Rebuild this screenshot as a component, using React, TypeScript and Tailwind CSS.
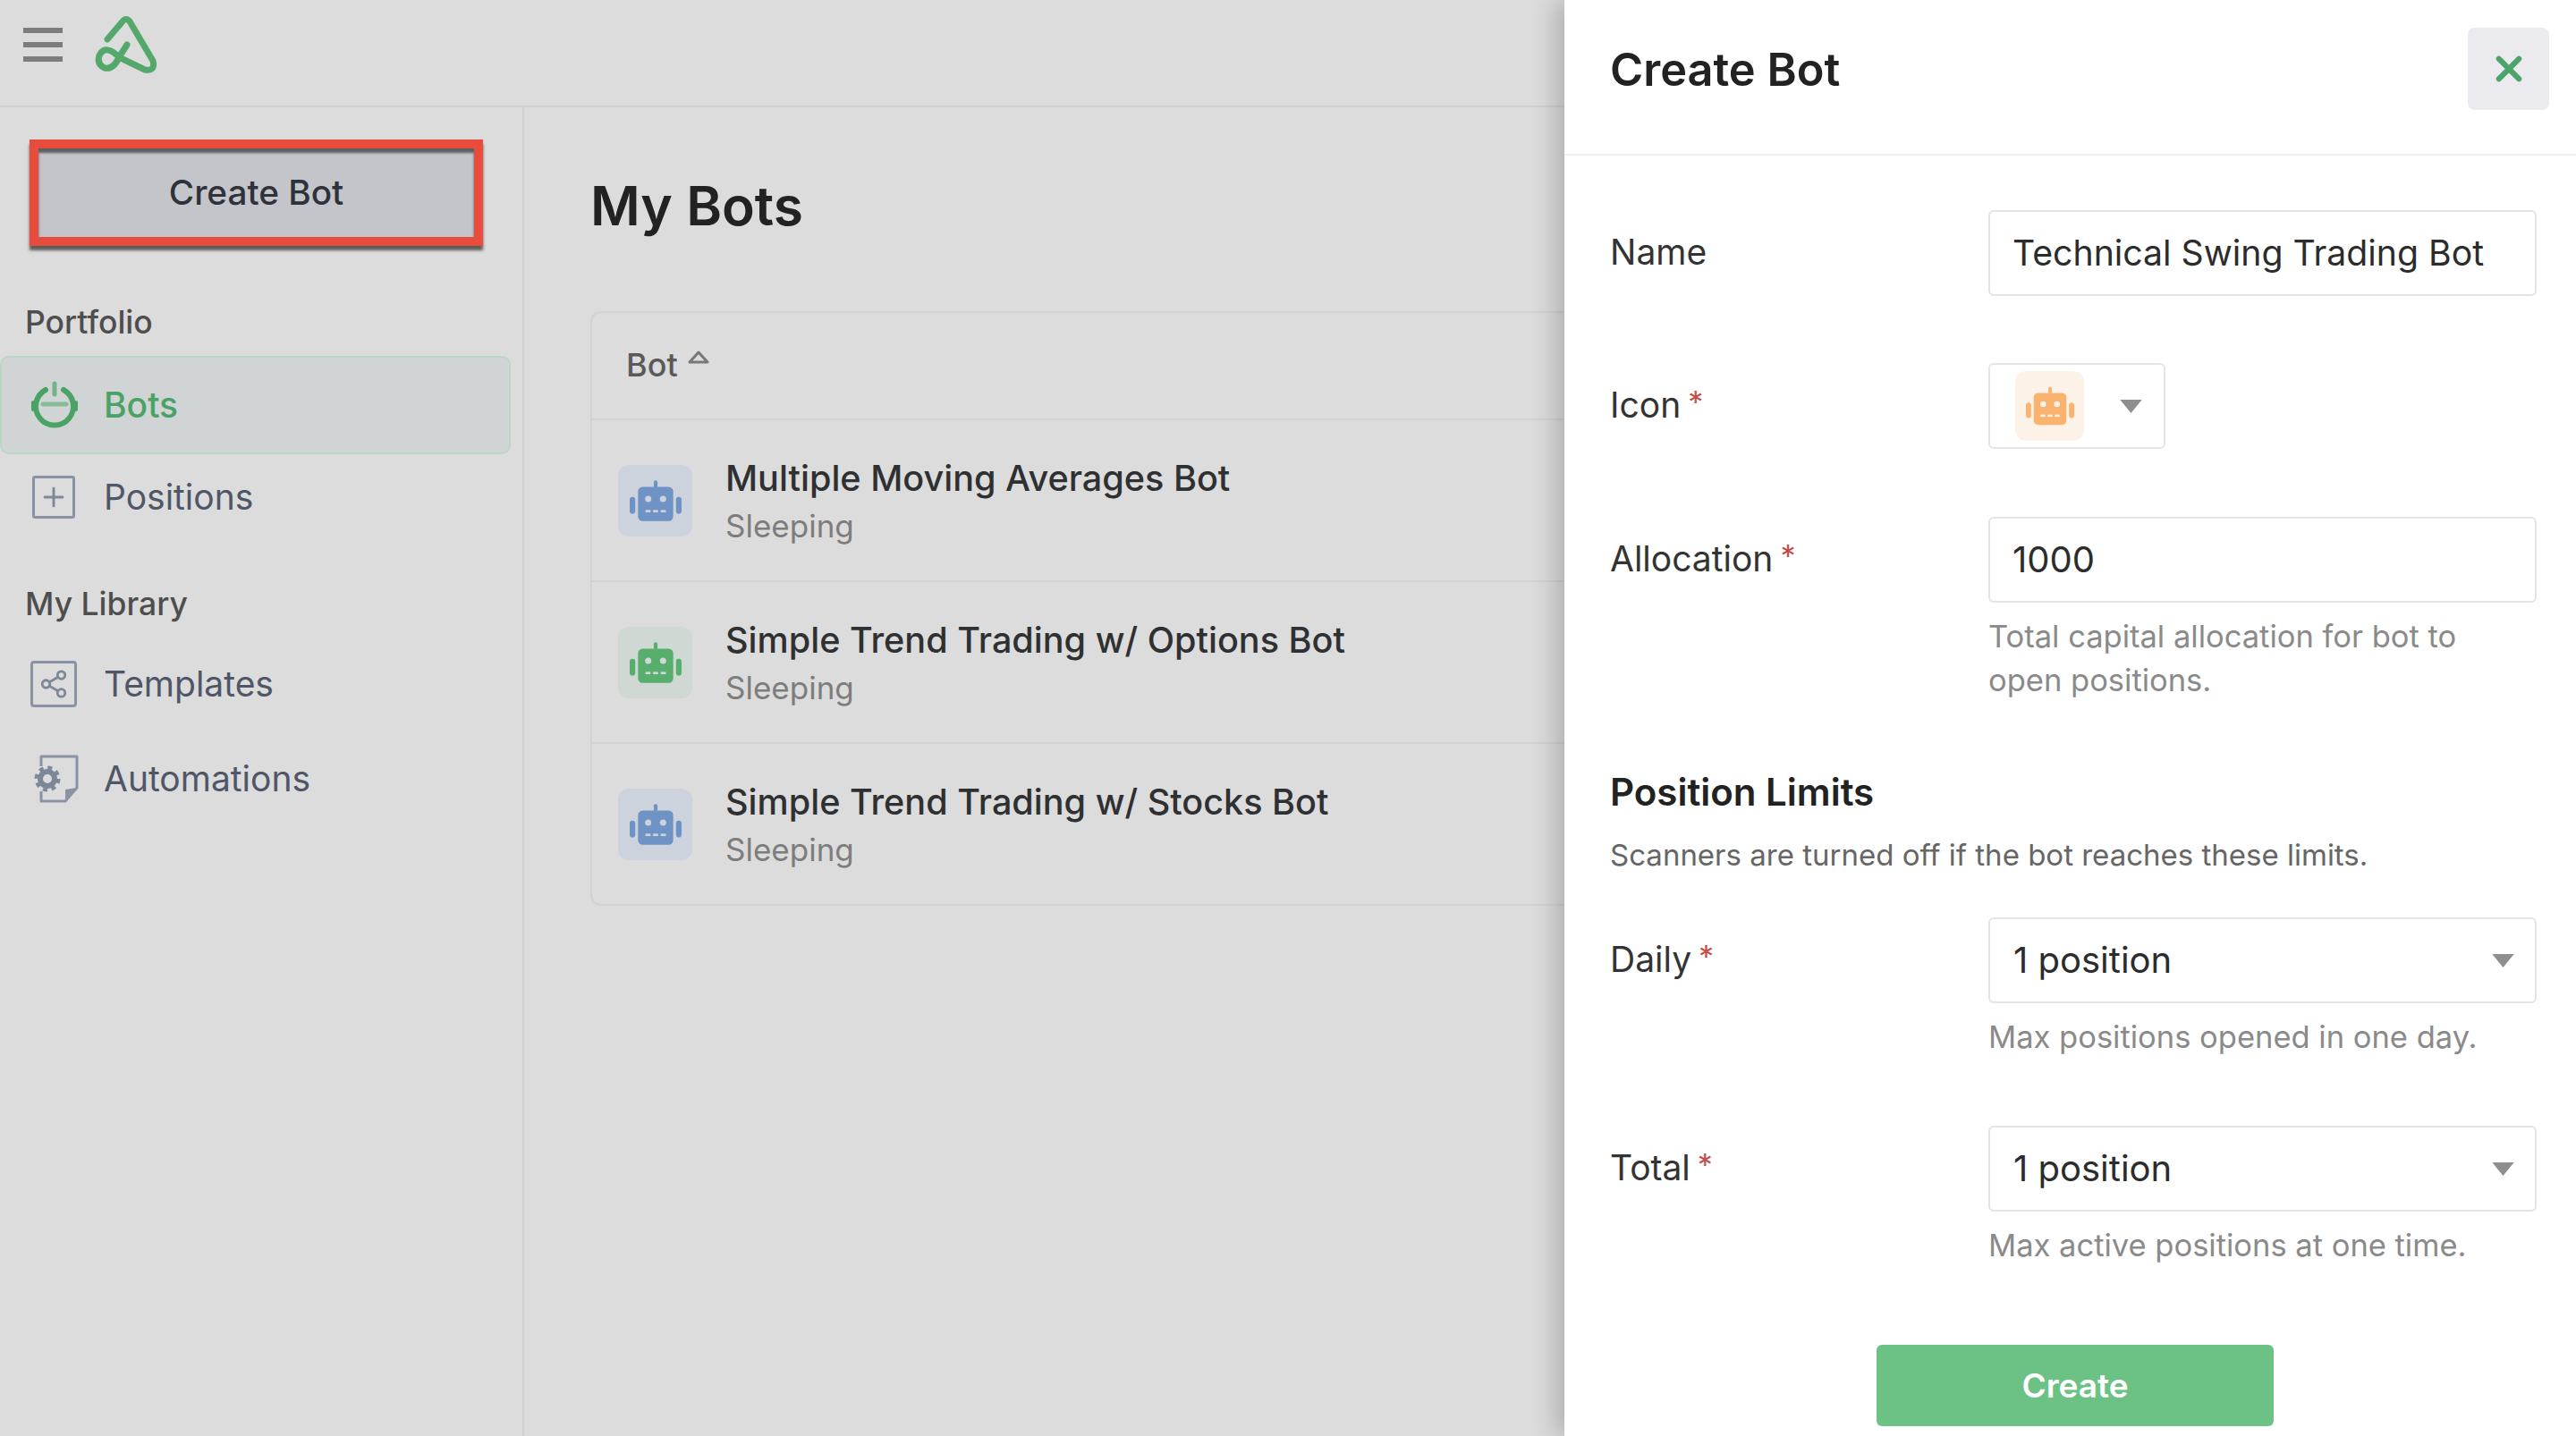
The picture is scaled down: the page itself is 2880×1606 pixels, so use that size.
import { Plus, Share2 } from 'lucide-react';

const font = { fontFamily: 'Inter, "Liberation Sans", sans-serif' };

function Robot({ color, eye, className }: { color: string; eye: string; className?: string }) {
  return (
    <svg viewBox="0 0 56 44" className={className ?? 'w-[58px] h-[46px]'}>
      <rect x="26" y="0" width="4" height="8" rx="2" fill={color} />
      <rect x="9" y="7" width="38" height="37" rx="5" fill={color} />
      <rect x="0" y="18" width="6" height="18" rx="3" fill={color} />
      <rect x="50" y="18" width="6" height="18" rx="3" fill={color} />
      <circle cx="20" cy="20" r="3.4" fill={eye} />
      <circle cx="36" cy="20" r="3.4" fill={eye} />
      <rect x="17" y="32" width="5.5" height="2.6" fill={eye} />
      <rect x="25.2" y="32" width="5.5" height="2.6" fill={eye} />
      <rect x="33.5" y="32" width="5.5" height="2.6" fill={eye} />
    </svg>
  );
}

function Logo() {
  return (
    <svg viewBox="0 0 70 66" className="w-[70px] h-[66px]" fill="none" stroke="#55a86c" strokeWidth="7" strokeLinecap="round" strokeLinejoin="round">
      <path d="M14 26 L31 6 Q35 1 39 6 L65 50 Q68 62 56 60 L29 47" />
      <path d="M36 32 L27 46 Q21 60 11 58 Q2 54 5 44 Q10 34 20 40 L29 47" />
    </svg>
  );
}

function BotsIcon() {
  return (
    <svg viewBox="0 0 54 54" className="w-[54px] h-[54px]" fill="none">
      <path d="M17 10 A21 21 0 1 0 37 10" stroke="#4ba265" strokeWidth="6" strokeLinecap="round" />
      <rect x="1" y="22" width="4" height="12" rx="2" fill="#4ba265" />
      <rect x="49" y="22" width="4" height="12" rx="2" fill="#4ba265" />
      <path d="M27 3 V15" stroke="#74b388" strokeWidth="5" strokeLinecap="round" />
      <path d="M14 26 H40" stroke="#86bb97" strokeWidth="5" strokeLinecap="round" />
    </svg>
  );
}

function AutomationIcon() {
  return (
    <svg viewBox="0 0 50 54" className="w-[50px] h-[54px] ml-[6px]" fill="none">
      <path d="M8 13 V2 H48 V37 L35 52 H8 V41" stroke="#8a93a3" strokeWidth="3" strokeLinejoin="round" />
      <path d="M48 37 L35 39 V52 Z" fill="#8a93a3" />
      <circle cx="15" cy="27" r="8" stroke="#7e8798" strokeWidth="6" />
      <circle cx="15" cy="27" r="12.5" stroke="#7e8798" strokeWidth="4" strokeDasharray="5 4.8" />
    </svg>
  );
}

function NavItem({ icon, label, className }: { icon: React.ReactNode; label: string; className?: string }) {
  return (
    <div className={`flex items-center ${className ?? 'h-[106px]'}`}>
      <div className="w-[116px] pl-[32px] shrink-0 flex items-center">{icon}</div>
      <span className="text-[39px] text-[#4f5668]">{label}</span>
    </div>
  );
}

function BotRow({ title, color, tint, eye }: { title: string; color: string; tint: string; eye: string }) {
  return (
    <div className="h-[181px] border-t-2 border-[#d2d2d2] flex items-center pl-[29px]">
      <div className={`w-[83px] h-[80px] rounded-[12px] flex items-center justify-center shrink-0 ${tint}`}>
        <Robot color={color} eye={eye} />
      </div>
      <div className="ml-[37px] pt-[3px]">
        <div className="text-[39.6px] leading-[54px] font-medium text-[#2f3032] whitespace-nowrap">{title}</div>
        <div className="text-[35px] leading-[52px] text-[#7d7d7d]">Sleeping</div>
      </div>
    </div>
  );
}

function Req({ label }: { label: string }) {
  return (
    <span className="text-[39px] text-[#333] flex items-start pb-[2px]">
      {label}
      <span className="ml-[8px] mt-[6px] text-[34px] leading-[40px] text-[#c0504d]">*</span>
    </span>
  );
}

function Caret({ className }: { className?: string }) {
  return (
    <svg viewBox="0 0 26 16" className={`w-[25px] h-[15px] ${className ?? ''}`}>
      <path d="M0 0 H26 L13 16 Z" fill="#8f8f8f" />
    </svg>
  );
}

function SelectBox({ value }: { value: string }) {
  return (
    <div className="h-[96px] border-2 border-[#e4e4e6] rounded-[6px] flex items-center justify-between pl-[26px] pr-[23px] text-[40px] text-[#2c2c2c]">
      {value}
      <Caret />
    </div>
  );
}

const helpText = 'mt-[13px] text-[34.5px] leading-[49px] text-[#8a8a8a]';

export default function App() {
  return (
    <div className="w-[2880px] h-[1606px] flex overflow-hidden bg-[#dcdcdc]" style={font}>
      {/* page behind the drawer */}
      <div className="w-[1749px] shrink-0 flex flex-col">
        <div className="h-[120px] shrink-0 border-b-2 border-[#d0d0d0] flex items-center pl-[26px]">
          <div className="w-[44px] flex flex-col gap-[10px] -mt-[18px]">
            <div className="h-[6px] bg-[#7d7d7d]" />
            <div className="h-[6px] bg-[#7d7d7d]" />
            <div className="h-[6px] bg-[#7d7d7d]" />
          </div>
          <div className="ml-[36px] -mt-[16px]"><Logo /></div>
        </div>
        <div className="flex-1 flex min-h-0">
          <div className="w-[586px] shrink-0 border-r-2 border-[#d0d0d0]">
            <div className="mt-[36px] ml-[33px] w-[507px] h-[119px] border-[10px] border-[#e84c3d] bg-[#c4c5ca] shadow-[0_5px_3px_rgba(50,50,50,0.75),inset_0_5px_3px_rgba(50,50,50,0.7)] flex items-center justify-center text-[38.7px] font-medium text-[#2f323a]">
              Create Bot
            </div>
            <div className="mt-[61px] ml-[28px] text-[35.5px] leading-[50px] font-medium text-[#4e4e4e]">Portfolio</div>
            <div className="mt-[12px] w-[571px] h-[110px] rounded-[10px] border-2 border-[#bcd6c5] bg-[#d0d4d5] flex items-center">
              <div className="w-[114px] pl-[32px] shrink-0 flex items-center"><BotsIcon /></div>
              <span className="text-[39px] font-medium text-[#4ba265]">Bots</span>
            </div>
            <NavItem
              label="Positions"
              className="h-[96px]"
              icon={
                <div className="w-[48px] h-[48px] ml-[4px] border-[3px] border-[#8a93a3] rounded-[3px] flex items-center justify-center">
                  <Plus size={34} strokeWidth={2} className="text-[#7e8798]" />
                </div>
              }
            />
            <div className="mt-[47px] ml-[28px] text-[35.5px] leading-[50px] font-medium text-[#4e4e4e]">My Library</div>
            <NavItem
              label="Templates"
              className="h-[106px] mt-[11px]"
              icon={
                <div className="w-[52px] h-[52px] ml-[2px] border-[3px] border-[#8a93a3] rounded-[4px] flex items-center justify-center">
                  <Share2 size={34} strokeWidth={2} className="text-[#7e8798]" />
                </div>
              }
            />
            <NavItem label="Automations" icon={<AutomationIcon />} />
          </div>
          <div className="flex-1 pl-[74px] min-w-0">
            <h1 className="mt-[76px] text-[60.5px] leading-[68px] font-semibold text-[#222]">My Bots</h1>
            <div className="mt-[84px] -mr-[40px] border-2 border-r-0 border-[#d2d2d2] rounded-l-[12px]">
              <div className="h-[118px] flex items-start pl-[38px] pt-[31px]">
                <span className="text-[36px] font-medium text-[#5a5a5a]">Bot</span>
                <svg viewBox="0 0 24 16" className="w-[24px] h-[16px] ml-[11px] mt-[11px]" fill="none">
                  <path d="M12 2 L22 13 H2 Z" stroke="#777" strokeWidth="3" strokeLinejoin="round" />
                </svg>
              </div>
              <BotRow title="Multiple Moving Averages Bot" color="#6f93c4" tint="bg-[#cdd3dc]" eye="#cdd3dc" />
              <BotRow title="Simple Trend Trading w/ Options Bot" color="#57ae6d" tint="bg-[#cfd8d3]" eye="#cfd8d3" />
              <BotRow title="Simple Trend Trading w/ Stocks Bot" color="#6f93c4" tint="bg-[#cdd3dc]" eye="#cdd3dc" />
            </div>
          </div>
        </div>
      </div>

      {/* drawer */}
      <div className="relative flex-1 bg-white shadow-[-10px_0_26px_rgba(0,0,0,0.2)] flex flex-col">
        <div className="h-[174px] shrink-0 border-b-2 border-[#f0f0f0] flex items-center justify-between pl-[51px] pr-[30px] pb-[16px]">
          <h2 className="text-[50.5px] font-semibold text-[#222]">Create Bot</h2>
          <div className="w-[91px] h-[92px] -mt-[2px] rounded-[8px] bg-[#ebebef] flex items-center justify-center">
            <svg viewBox="0 0 32 32" className="w-[30px] h-[30px]">
              <path d="M4 4 L28 28 M28 4 L4 28" stroke="#4ca468" strokeWidth="6.5" strokeLinecap="round" />
            </svg>
          </div>
        </div>

        <div className="flex-1 pl-[51px] pr-[44px] pt-[61px]">
          <div className="grid grid-cols-[423px_1fr] items-start">
            <div className="h-[96px] flex items-center pb-[2px]"><span className="text-[39px] text-[#333]">Name</span></div>
            <div className="h-[96px] border-2 border-[#e4e4e6] rounded-[6px] flex items-center pl-[25px] text-[39.2px] text-[#2c2c2c]">Technical Swing Trading Bot</div>

            <div className="mt-[75px] h-[96px] flex items-center"><Req label="Icon" /></div>
            <div className="mt-[75px] w-[198px] h-[96px] border-2 border-[#e4e4e6] rounded-[6px] flex items-center pl-[28px]">
              <div className="w-[77px] h-[78px] rounded-[12px] bg-[#fdf2e8] flex items-center justify-center">
                <Robot color="#fab36e" eye="#fdf2e8" className="w-[54px] h-[44px]" />
              </div>
              <Caret className="ml-[40px]" />
            </div>

            <div className="mt-[76px] h-[96px] flex items-center"><Req label="Allocation" /></div>
            <div className="mt-[76px]">
              <div className="h-[96px] border-2 border-[#e4e4e6] rounded-[6px] flex items-center pl-[25px] text-[40px] text-[#2c2c2c]">1000</div>
              <p className={helpText}>Total capital allocation for bot to<br />open positions.</p>
            </div>
          </div>

          <h3 className="mt-[73px] text-[42px] leading-[56px] font-semibold text-[#222]">Position Limits</h3>
          <p className="mt-[19px] text-[33px] leading-[46px] text-[#666] whitespace-nowrap">Scanners are turned off if the bot reaches these limits.</p>

          <div className="mt-[47px] grid grid-cols-[423px_1fr] items-start">
            <div className="h-[96px] flex items-center"><Req label="Daily" /></div>
            <div>
              <SelectBox value="1 position" />
              <p className={helpText}>Max positions opened in one day.</p>
            </div>

            <div className="mt-[75px] h-[96px] flex items-center"><Req label="Total" /></div>
            <div className="mt-[75px]">
              <SelectBox value="1 position" />
              <p className={helpText}>Max active positions at one time.</p>
            </div>
          </div>

          <div className="mt-[87px] flex justify-center pl-[4px]">
            <button className="w-[444px] h-[91px] rounded-[6px] bg-[#6cc285] text-white text-[37px] font-semibold">Create</button>
          </div>
        </div>
      </div>
    </div>
  );
}
